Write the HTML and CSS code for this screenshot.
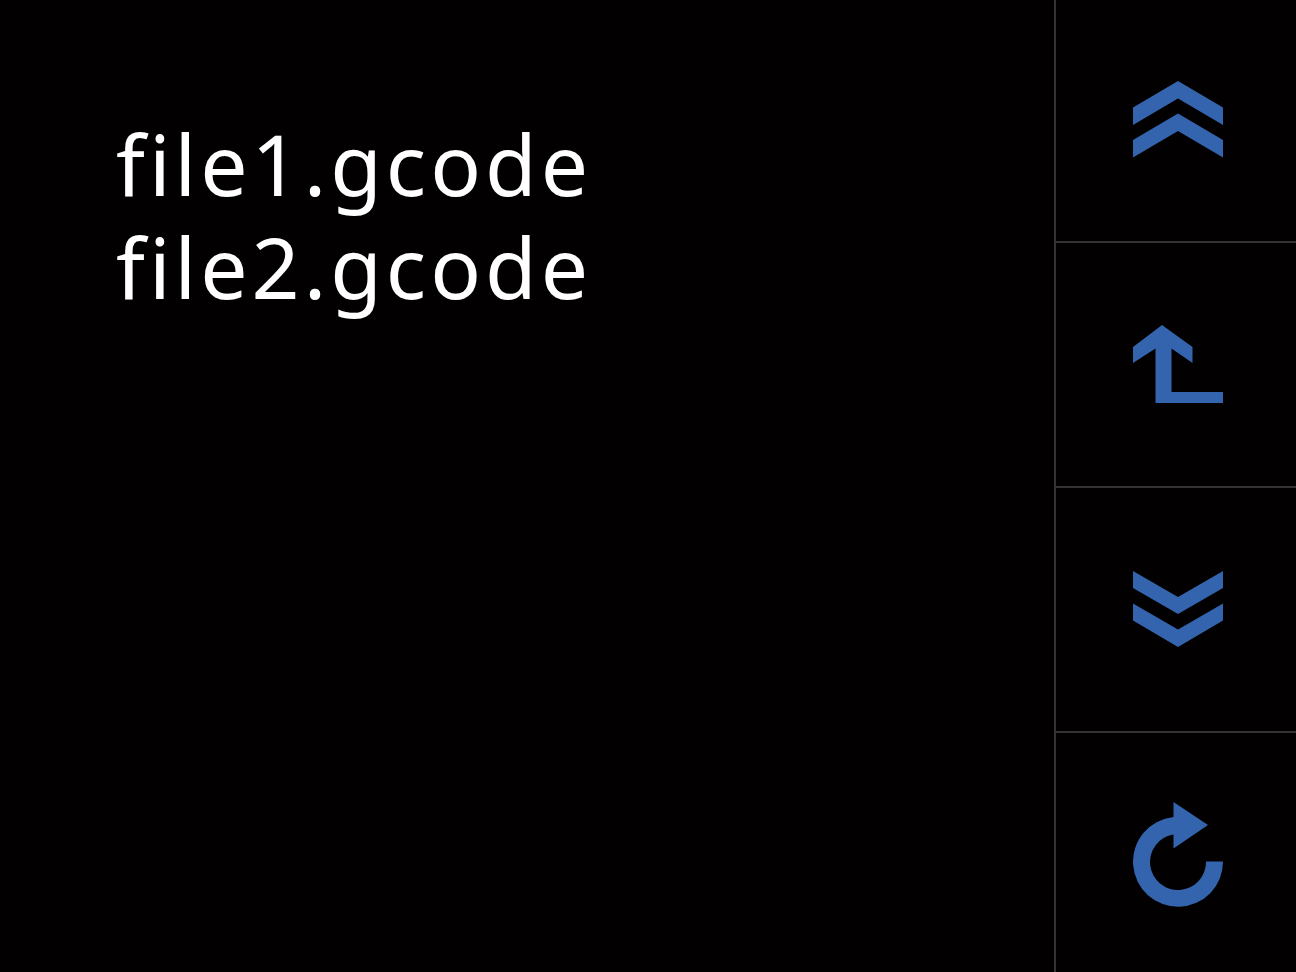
FILE: index.html
```html
<!DOCTYPE html>
<html lang="en">
<head>
    <meta charset="UTF-8">
    <meta name="viewport" content="width=device-width, initial-scale=1.0">
    <title>Print files</title>
    <link rel="stylesheet" href="styles.css">
</head>
<body>
    <div class="screen">
        <main class="files">
            <ul class="file-list">
                <li><button type="button" class="file">file1.gcode</button></li>
                <li><button type="button" class="file">file2.gcode</button></li>
            </ul>
        </main>

        <nav class="sidebar">
            <button type="button" class="nav-btn" aria-label="Page up">
                <svg class="icon" viewBox="0 0 90 110">
                    <path d="M45 15 L90 41.5 V59 L45 32.5 L0 59 V41.5 Z"/>
                    <path d="M45 47.5 L90 74 V91.5 L45 65 L0 91.5 V74 Z"/>
                </svg>
            </button>
            <button type="button" class="nav-btn" aria-label="Parent folder">
                <svg class="icon" viewBox="0 0 90 110">
                    <path d="M29 15 L59.5 37 V53 L38.5 38.5 V82 H90 V93 H22.5 V38.5 L0 53 V37 Z"/>
                </svg>
            </button>
            <button type="button" class="nav-btn" aria-label="Page down">
                <svg class="icon" viewBox="0 0 90 110">
                    <path d="M0 16 L45 42 L90 16 V33 L45 59 L0 33 Z"/>
                    <path d="M0 48.5 L45 74.5 L90 48.5 V65.5 L45 92 L0 65.5 Z"/>
                </svg>
            </button>
            <button type="button" class="nav-btn" aria-label="Refresh">
                <svg class="icon" viewBox="0 0 90 110">
                    <path d="M90 63.5 A45 45 0 1 1 40.5 19 V4 L75 27 L40.5 50.5 V36.4 A28 28 0 1 0 73 63.5 Z"/>
                </svg>
            </button>
        </nav>
    </div>
</body>
</html>
```
FILE: styles.css
```css
* {
    margin: 0;
    padding: 0;
    box-sizing: border-box;
}

body {
    font-family: 'Noto Sans', 'Open Sans', sans-serif;
    background: #020001;
    color: white;
}

button {
    border: none;
    background: none;
    color: inherit;
    font: inherit;
    cursor: pointer;
}

.screen {
    display: flex;
    min-height: 100vh;
}

/* File list */
.files {
    flex: 1;
    padding: 112px 40px 40px 116px;
}

.file-list {
    list-style: none;
}

.file {
    display: block;
    font-size: 84px;
    line-height: 103px;
    letter-spacing: 4px;
    text-align: left;
}

/* Navigation buttons */
.sidebar {
    display: grid;
    grid-template-rows: 243fr 245fr 245fr 239fr;
    width: 242px;
    border-left: 2px solid #333;
}

.nav-btn {
    display: flex;
    justify-content: center;
    align-items: center;
    padding-left: 4px;
    border-bottom: 2px solid #333;
}

.nav-btn:last-child {
    border-bottom: none;
}

.icon {
    width: 90px;
    height: 110px;
    fill: #3464ad;
}
```
